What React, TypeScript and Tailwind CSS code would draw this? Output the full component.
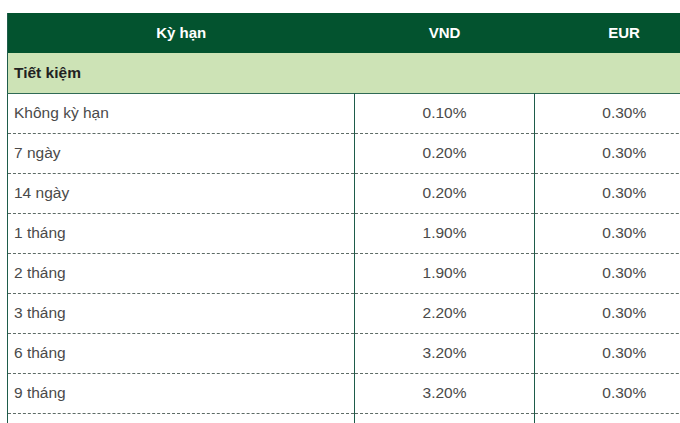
const rows: [string, string, string][] = [
  ["Không kỳ hạn", "0.10%", "0.30%"],
  ["7 ngày", "0.20%", "0.30%"],
  ["14 ngày", "0.20%", "0.30%"],
  ["1 tháng", "1.90%", "0.30%"],
  ["2 tháng", "1.90%", "0.30%"],
  ["3 tháng", "2.20%", "0.30%"],
  ["6 tháng", "3.20%", "0.30%"],
  ["9 tháng", "3.20%", "0.30%"],
  ["12 tháng", "4.80%", "0.30%"],
];

export default function App() {
  return (
    <div className="w-[680px] h-[423px] overflow-hidden bg-white font-['Liberation_Sans',Arial,sans-serif] text-[15.5px]">
      <div className="pt-[13px] pl-[7px]">
        <table className="w-[706px] border-collapse table-fixed border-l border-[#1e5c4a]">
          <colgroup>
            <col className="w-[347px]" />
            <col className="w-[180px]" />
            <col className="w-[179px]" />
          </colgroup>
          <thead>
            <tr className="h-[40px] bg-[#03532f] text-white font-bold text-[15px]">
              <th className="text-center">Kỳ hạn</th>
              <th className="text-center">VND</th>
              <th className="text-center">EUR</th>
            </tr>
          </thead>
          <tbody>
            <tr className="h-[40px] bg-[#cde3b6] border-b border-[#2f6a55]">
              <td colSpan={3} className="pl-[6px] font-bold text-[#222]">
                Tiết kiệm
              </td>
            </tr>
            {rows.map(([term, vnd, eur]) => (
              <tr key={term} className="h-[40px] border-b border-dashed border-[#5d6b66] text-[#4a4a4a]">
                <td className="pl-[6px]">{term}</td>
                <td className="text-center border-l border-[#1e5c4a]">{vnd}</td>
                <td className="text-center border-l border-[#1e5c4a]">{eur}</td>
              </tr>
            ))}
          </tbody>
        </table>
      </div>
    </div>
  );
}
